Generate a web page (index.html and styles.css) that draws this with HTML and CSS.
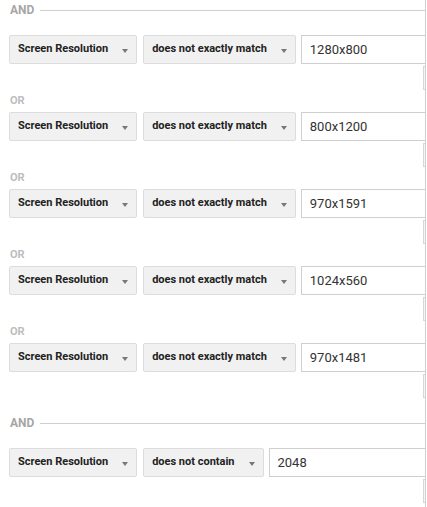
FILE: index.html
```html
<!DOCTYPE html>
<html>
<head>
<meta charset="utf-8">
<link rel="stylesheet" href="styles.css">
</head>
<body>
<div class="panel">
  <div class="sep"><span class="sep-label">AND</span><span class="sep-line"></span></div>

  <div class="row">
    <div class="select"><span class="select-text">Screen Resolution</span><span class="caret"></span></div>
    <div class="select"><span class="select-text">does not exactly match</span><span class="caret"></span></div>
    <div class="field">1280x800</div>
  </div>
  <div class="tail"><span class="tail-btn"></span></div>
  <div class="or">OR</div>

  <div class="row">
    <div class="select"><span class="select-text">Screen Resolution</span><span class="caret"></span></div>
    <div class="select"><span class="select-text">does not exactly match</span><span class="caret"></span></div>
    <div class="field">800x1200</div>
  </div>
  <div class="tail"><span class="tail-btn"></span></div>
  <div class="or">OR</div>

  <div class="row">
    <div class="select"><span class="select-text">Screen Resolution</span><span class="caret"></span></div>
    <div class="select"><span class="select-text">does not exactly match</span><span class="caret"></span></div>
    <div class="field">970x1591</div>
  </div>
  <div class="tail"><span class="tail-btn"></span></div>
  <div class="or">OR</div>

  <div class="row">
    <div class="select"><span class="select-text">Screen Resolution</span><span class="caret"></span></div>
    <div class="select"><span class="select-text">does not exactly match</span><span class="caret"></span></div>
    <div class="field">1024x560</div>
  </div>
  <div class="tail"><span class="tail-btn"></span></div>
  <div class="or">OR</div>

  <div class="row">
    <div class="select"><span class="select-text">Screen Resolution</span><span class="caret"></span></div>
    <div class="select"><span class="select-text">does not exactly match</span><span class="caret"></span></div>
    <div class="field">970x1481</div>
  </div>
  <div class="tail"><span class="tail-btn"></span></div>

  <div class="sep sep-spaced"><span class="sep-label">AND</span><span class="sep-line"></span></div>

  <div class="row">
    <div class="select"><span class="select-text">Screen Resolution</span><span class="caret"></span></div>
    <div class="select"><span class="select-text">does not contain</span><span class="caret"></span></div>
    <div class="field">2048</div>
  </div>
  <div class="tail"><span class="tail-btn"></span></div>
</div>
</body>
</html>
```

FILE: styles.css
```css
html, body {
  margin: 0;
  padding: 0;
  background: #ffffff;
}

body {
  font-family: Roboto, "Liberation Sans", Arial, sans-serif;
  color: #222;
}

.panel {
  width: 426px;
  height: 507px;
  box-sizing: border-box;
  border-right: 1px solid #cfcfcf;
  padding-left: 9px;
  overflow: hidden;
}

.sep {
  display: flex;
  align-items: center;
  height: 20px;
}

.sep-spaced {
  margin-top: 15px;
}

.sep-label {
  font-size: 12px;
  font-weight: 700;
  color: #a6a6a6;
  padding-left: 1px;
  line-height: 20px;
}

.sep-line {
  flex: 1;
  height: 1px;
  background: #cfcfcf;
  margin-left: 6px;
}

.row {
  display: flex;
  align-items: stretch;
  height: 29px;
  margin-top: 15px;
  white-space: nowrap;
}

.or + .row {
  margin-top: 0;
}

.select {
  display: flex;
  align-items: center;
  box-sizing: border-box;
  height: 29px;
  padding: 0 8px;
  background: #f1f1f1;
  border: 1px solid #dcdcdc;
  border-radius: 2px;
  margin-right: 6px;
  flex: none;
}

.select + .select {
  margin-right: 5px;
}

.select-text {
  font-size: 11px;
  font-weight: 700;
  color: #222;
  line-height: 1;
  position: relative;
  top: -1px;
}

.caret {
  width: 0;
  height: 0;
  margin-left: 14px;
  border-left: 3.5px solid transparent;
  border-right: 3.5px solid transparent;
  border-top: 4px solid #777;
  margin-top: 2px;
}

.field {
  flex: none;
  width: 220px;
  box-sizing: border-box;
  height: 29px;
  border: 1px solid #cfcfcf;
  padding: 0 8px;
  font-size: 13px;
  line-height: 27px;
  color: #333;
  background: #fff;
}

.tail {
  height: 24px;
  margin-top: 2px;
}

.tail-btn {
  display: block;
  margin-left: 414px;
  width: 24px;
  height: 24px;
  box-sizing: border-box;
  border: 1px solid #d6d6d6;
  background: #f6f6f6;
}

.or {
  height: 22px;
  line-height: 22px;
  font-size: 11px;
  font-weight: 700;
  color: #bdbdbd;
  padding-left: 1px;
}
```
